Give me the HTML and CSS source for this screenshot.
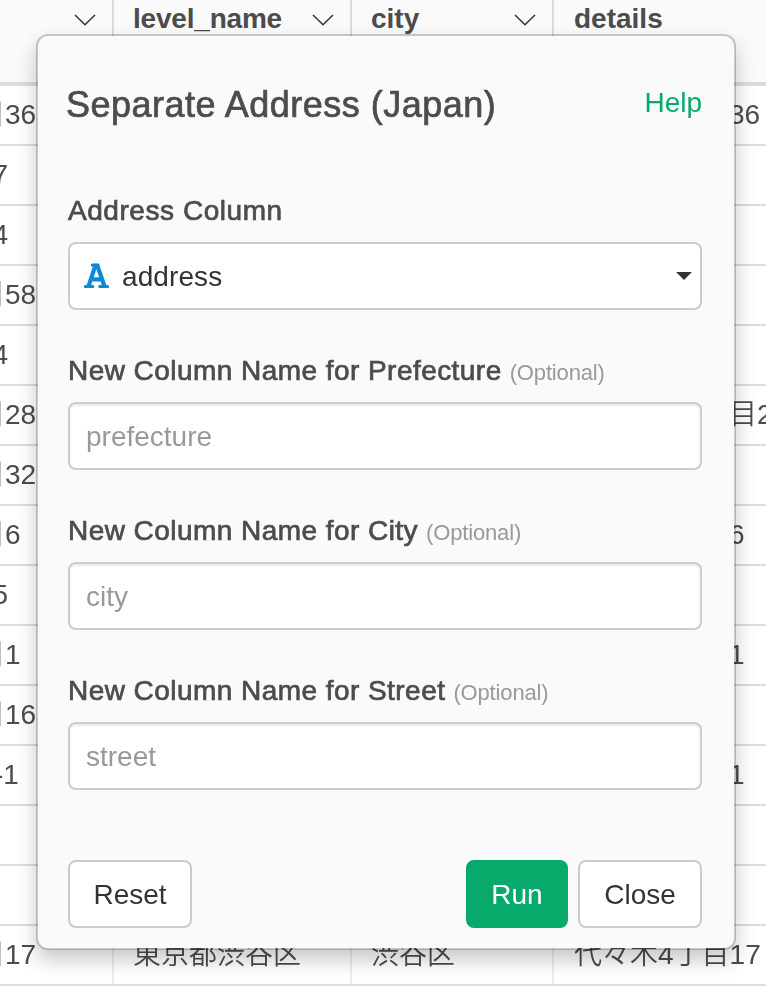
FILE: index.html
```html
<!DOCTYPE html>
<html lang="ja">
<head>
<meta charset="utf-8">
<title>Separate Address (Japan)</title>
<link rel="stylesheet" href="styles.css">
</head>
<body>
<div class="grid">
  <div class="head">
    <div class="cell"><span></span><svg class="chev" viewBox="0 0 22 12"><path d="M1 1 11 10.800 21 1"/></svg></div>
    <div class="cell"><span class="name-level">level_name</span><svg class="chev" viewBox="0 0 22 12"><path d="M1 1 11 10.800 21 1"/></svg></div>
    <div class="cell"><span>city</span><svg class="chev" viewBox="0 0 22 12"><path d="M1 1 11 10.800 21 1"/></svg></div>
    <div class="cell"><span>details</span></div>
  </div>
  <div class="row"><div class="cell cut-kanji">目36</div><div class="cell"></div><div class="cell"></div><div class="cell tail">36</div></div>
  <div class="row"><div class="cell cut-digit">7</div><div class="cell"></div><div class="cell"></div><div class="cell"></div></div>
  <div class="row"><div class="cell cut-digit">4</div><div class="cell"></div><div class="cell"></div><div class="cell"></div></div>
  <div class="row"><div class="cell cut-kanji">目58</div><div class="cell"></div><div class="cell"></div><div class="cell"></div></div>
  <div class="row"><div class="cell cut-digit">4</div><div class="cell"></div><div class="cell"></div><div class="cell"></div></div>
  <div class="row"><div class="cell cut-kanji">目28</div><div class="cell"></div><div class="cell"></div><div class="cell tail">目2</div></div>
  <div class="row"><div class="cell cut-kanji">目32</div><div class="cell"></div><div class="cell"></div><div class="cell"></div></div>
  <div class="row"><div class="cell cut-kanji">目6</div><div class="cell"></div><div class="cell"></div><div class="cell tail">6</div></div>
  <div class="row"><div class="cell cut-digit">5</div><div class="cell"></div><div class="cell"></div><div class="cell"></div></div>
  <div class="row"><div class="cell cut-kanji">目1</div><div class="cell"></div><div class="cell"></div><div class="cell tail">1</div></div>
  <div class="row"><div class="cell cut-kanji">目16</div><div class="cell"></div><div class="cell"></div><div class="cell"></div></div>
  <div class="row"><div class="cell cut-dash">-1</div><div class="cell"></div><div class="cell"></div><div class="cell tail">1</div></div>
  <div class="row"><div class="cell"></div><div class="cell"></div><div class="cell"></div><div class="cell"></div></div>
  <div class="row"><div class="cell"></div><div class="cell"></div><div class="cell"></div><div class="cell"></div></div>
  <div class="row"><div class="cell cut-kanji">目17</div><div class="cell">東京都渋谷区</div><div class="cell">渋谷区</div><div class="cell">代々木4丁目17</div></div>
</div>

<form class="dialog">
  <header class="top">
    <h1>Separate Address (Japan)</h1>
    <a class="help">Help</a>
  </header>
  <div class="field">
    <div class="label"><span class="l-address">Address Column</span></div>
    <div class="box select">
      <svg class="type" viewBox="0 0 25 26"><path class="frame" d="M4.600 23 11.300 2.800H13.400L20.400 23M7 16.300H18"/><path class="serif" d="M8.500 2.200H14M1.500 23.500H8.800M15.800 23.500H23.500"/></svg>
      <span class="value">address</span>
      <span class="caret"></span>
    </div>
  </div>
  <div class="field">
    <div class="label"><span>New Column Name for Prefecture</span><small>(Optional)</small></div>
    <input class="box" placeholder="prefecture">
  </div>
  <div class="field">
    <div class="label"><span>New Column Name for City</span><small>(Optional)</small></div>
    <input class="box" placeholder="city">
  </div>
  <div class="field">
    <div class="label"><span>New Column Name for Street</span><small>(Optional)</small></div>
    <input class="box" placeholder="street">
  </div>
  <footer class="actions">
    <button type="button" class="btn reset">Reset</button>
    <button type="button" class="btn run">Run</button>
    <button type="button" class="btn close">Close</button>
  </footer>
</form>
</body>
</html>
```
FILE: styles.css
```css
* { box-sizing: border-box; }
body {
  margin: 0;
  width: 766px;
  height: 986px;
  overflow: hidden;
  position: relative;
  background: #fff;
  color: #4c4c4c;
  font: 28px "Liberation Sans", "Noto Sans CJK JP", sans-serif;
}
.grid { opacity: .999; }
.head, .row {
  display: grid;
  grid-template-columns: 114px 238px 202px 212px;
}
.head {
  height: 86px;
  background: #fafafa;
  border-bottom: 4px solid #dcdcdc;
  font-weight: 700;
}
.row { height: 60px; border-bottom: 2px solid #dcdcdc; }
.cell {
  padding-left: 19px;
  border-right: 2px solid #ececec;
  line-height: 58px;
  white-space: nowrap;
  overflow: hidden;
  font-weight: 350;
}
.cell:last-child { border-right: 0; padding-left: 20px; }
.head .cell {
  display: flex;
  justify-content: space-between;
  padding-right: 16px;
  border-color: #dcdcdc;
  line-height: 38px;
  font-weight: 700;
}
.name-level { letter-spacing: -.2px; }
.chev { width: 22px; height: 12px; margin-top: 14px; fill: none; stroke: #333; stroke-width: 1.5; }
.row .cut-kanji { padding: 0; text-indent: -23px; }
.row .cut-digit { padding: 0; text-indent: -7.500px; }
.row .cut-dash { padding: 0; text-indent: -6px; }
.row .tail:last-child { padding-left: 175px; }

.dialog {
  position: absolute;
  left: 36px;
  top: 34px;
  width: 700px;
  height: 916px;
  padding: 0 32px 0 30px;
  display: flex;
  flex-direction: column;
  background: #fafafa;
  background-clip: padding-box;
  border: 2px solid rgba(0, 0, 0, .2);
  border-radius: 12px;
  box-shadow: 0 10px 20px rgba(0, 0, 0, .22);
}
.top { display: flex; justify-content: space-between; height: 154px; }
h1 {
  margin: 48px 0 0 -2px;
  font-size: 36px;
  font-weight: 400;
  line-height: 42px;
  letter-spacing: .5px;
  -webkit-text-stroke: .7px currentColor;
}
.help { color: #08aa6c; line-height: 32px; margin-top: 51px; }
.field { height: 160px; }
.label { display: flex; align-items: baseline; gap: 8px; height: 52px; line-height: 42px; white-space: nowrap; }
.label span { letter-spacing: .45px; -webkit-text-stroke: .7px currentColor; }
.label .l-address { letter-spacing: .55px; }
small { font-size: 22px; color: #999; letter-spacing: -.15px; }
.box {
  display: flex;
  align-items: center;
  width: 634px;
  height: 68px;
  padding: 2px 16px 0;
  border: 2px solid #ccc;
  border-radius: 8px;
  background: #fff;
  color: #333;
  font: inherit;
  outline: 0;
  box-shadow: inset 0 2px 2px rgba(0, 0, 0, .075);
}
.box::placeholder { color: #999; opacity: 1; }
.select { padding: 0 8px 0 14px; box-shadow: none; color: #333; }
.type { width: 25px; height: 26px; fill: none; stroke: #0a8bd6; }
.frame { stroke-width: 4.200; }
.serif { stroke-width: 3.200; stroke-linecap: round; }
.value { margin: 2px 0 0 13px; letter-spacing: .1px; }
.caret { margin-left: auto; border: 8px solid transparent; border-top-color: #333; border-bottom: 0; }
.actions { display: flex; gap: 10px; margin-top: 30px; }
.btn {
  width: 124px;
  height: 68px;
  padding: 2px 0 0;
  border: 2px solid #ccc;
  border-radius: 8px;
  background: #fff;
  color: #333;
  font: inherit;
}
.reset { margin-right: auto; }
.run { width: 102px; border-color: #08aa6c; background: #08aa6c; color: #fff; }
```
